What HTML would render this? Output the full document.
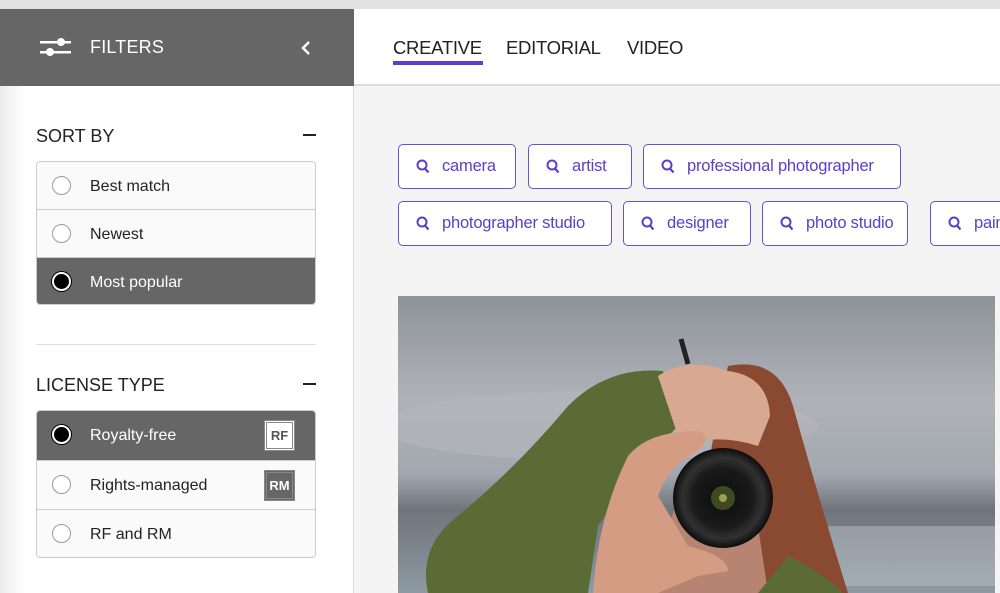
<!DOCTYPE html>
<html><head><meta charset="utf-8"><style>
*{box-sizing:border-box;margin:0;padding:0}
body{width:1000px;height:593px;overflow:hidden;background:#f4f4f4;font-family:"Liberation Sans",sans-serif;position:relative}
.topbar{position:absolute;left:0;top:0;width:1000px;height:9px;background:#e2e2e2}
.fh{position:absolute;left:0;top:9px;width:354px;height:77px;background:#666;color:#fff}
.fh .t{position:absolute;left:90px;top:28px;font-size:18px;letter-spacing:.2px}
.side{position:absolute;left:0;top:86px;width:354px;height:507px;background:linear-gradient(90deg,#ececec 0,#fff 26px);border-right:1px solid #ddd}
.mh{position:absolute;left:354px;top:9px;width:646px;height:77px;background:#fff;border-bottom:2px solid #ddd}
.tab{position:absolute;top:28px;font-size:18.5px;color:#222;letter-spacing:-.3px}
.h{position:absolute;left:36px;font-size:18px;color:#222}
.minus{position:absolute;left:303px;width:13px;height:2px;background:#222}
.box{position:absolute;left:36px;width:280px;border:1px solid #ccc;border-radius:4px;overflow:hidden;background:#fafafa}
.row{height:48px;border-bottom:1px solid #ccc;position:relative;font-size:16px;color:#222}
.row:last-child{border-bottom:none}
.row span{position:absolute;left:53px;top:16px}
.row i{position:absolute;left:15px;top:14px;width:19px;height:19px;border:1px solid #999;border-radius:50%;background:#fff}
.row.sel{background:#666;color:#fff}
.row.sel i{background:#000;border:2px solid #fff;box-shadow:0 0 0 1px #000}
.badge{position:absolute;left:227px;top:9px;width:31px;height:31px;border:1px solid #888;font-size:13px;font-weight:bold;text-align:center;line-height:25px}
.chip{position:absolute;height:45px;border:1.5px solid #6a50cf;border-radius:5px;background:#fff;color:#5a3fc8;font-size:16.5px;letter-spacing:-.2px;line-height:43px;padding-left:43px;white-space:nowrap;overflow:hidden}
.chip svg{position:absolute;left:17px;top:14px}
</style></head><body>
<div class="topbar"></div>
<div class="fh">
<svg style="position:absolute;left:39px;top:27px" width="34" height="22"><rect x="1" y="5" width="31" height="2.5" fill="#fff"/><rect x="1" y="15" width="31" height="2.5" fill="#fff"/><circle cx="22" cy="6" r="4" fill="#fff"/><circle cx="11" cy="16" r="4" fill="#fff"/></svg>
<div class="t">FILTERS</div>
<svg style="position:absolute;left:300px;top:31px" width="12" height="16"><path d="M9 2 L3 8 L9 14" stroke="#fff" stroke-width="2.5" fill="none"/></svg>
</div>
<div class="side"></div>
<div class="mh">
<div class="tab" style="left:39px">CREATIVE</div>
<div style="position:absolute;left:39px;top:52px;width:90px;height:4px;background:#5a3fd0"></div>
<div class="tab" style="left:152px">EDITORIAL</div>
<div class="tab" style="left:273px">VIDEO</div>
</div>

<div class="h" style="top:126px">SORT BY</div><div class="minus" style="top:134px"></div>
<div class="box" style="top:161px;height:144px">
<div class="row"><i></i><span>Best match</span></div>
<div class="row"><i></i><span>Newest</span></div>
<div class="row sel"><i></i><span>Most popular</span></div>
</div>
<div style="position:absolute;left:36px;top:344px;width:280px;height:1px;background:#ddd"></div>
<div class="h" style="top:375px">LICENSE TYPE</div><div class="minus" style="top:383px"></div>
<div class="box" style="top:410px;height:148px">
<div class="row sel" style="height:50px"><i></i><span>Royalty-free</span><div class="badge" style="background:#fff;color:#555;border:3px double #888">RF</div></div>
<div class="row" style="height:49px"><i></i><span>Rights-managed</span><div class="badge" style="background:#666;color:#fff;border:3px double #888">RM</div></div>
<div class="row"><i></i><span>RF and RM</span></div>
</div>

<div class="chip" style="left:398px;top:144px;width:118px"><svg width="14" height="16"><circle cx="6" cy="6" r="4.5" stroke="#5a3fc8" stroke-width="2" fill="none"/><path d="M9 9.5 L12.5 13.5" stroke="#5a3fc8" stroke-width="2.2"/></svg>camera</div>
<div class="chip" style="left:528px;top:144px;width:104px"><svg width="14" height="16"><circle cx="6" cy="6" r="4.5" stroke="#5a3fc8" stroke-width="2" fill="none"/><path d="M9 9.5 L12.5 13.5" stroke="#5a3fc8" stroke-width="2.2"/></svg>artist</div>
<div class="chip" style="left:643px;top:144px;width:258px"><svg width="14" height="16"><circle cx="6" cy="6" r="4.5" stroke="#5a3fc8" stroke-width="2" fill="none"/><path d="M9 9.5 L12.5 13.5" stroke="#5a3fc8" stroke-width="2.2"/></svg>professional photographer</div>
<div class="chip" style="left:398px;top:201px;width:214px"><svg width="14" height="16"><circle cx="6" cy="6" r="4.5" stroke="#5a3fc8" stroke-width="2" fill="none"/><path d="M9 9.5 L12.5 13.5" stroke="#5a3fc8" stroke-width="2.2"/></svg>photographer studio</div>
<div class="chip" style="left:623px;top:201px;width:128px"><svg width="14" height="16"><circle cx="6" cy="6" r="4.5" stroke="#5a3fc8" stroke-width="2" fill="none"/><path d="M9 9.5 L12.5 13.5" stroke="#5a3fc8" stroke-width="2.2"/></svg>designer</div>
<div class="chip" style="left:762px;top:201px;width:146px"><svg width="14" height="16"><circle cx="6" cy="6" r="4.5" stroke="#5a3fc8" stroke-width="2" fill="none"/><path d="M9 9.5 L12.5 13.5" stroke="#5a3fc8" stroke-width="2.2"/></svg>photo studio</div>
<div class="chip" style="left:930px;top:201px;width:90px"><svg width="14" height="16"><circle cx="6" cy="6" r="4.5" stroke="#5a3fc8" stroke-width="2" fill="none"/><path d="M9 9.5 L12.5 13.5" stroke="#5a3fc8" stroke-width="2.2"/></svg>painter</div>

<svg style="position:absolute;left:398px;top:296px" width="597" height="297" viewBox="0 0 597 297">
<defs>
<linearGradient id="sky" x1="0" y1="0" x2="0" y2="1"><stop offset="0" stop-color="#8e939a"/><stop offset=".35" stop-color="#b0b2b8"/><stop offset=".6" stop-color="#a2a8af"/><stop offset=".72" stop-color="#6f757b"/><stop offset="1" stop-color="#8d99a3"/></linearGradient>
<radialGradient id="lens"><stop offset="0" stop-color="#5a6a30"/><stop offset=".2" stop-color="#111"/><stop offset=".6" stop-color="#1a1a1a"/><stop offset=".8" stop-color="#333"/><stop offset="1" stop-color="#0d0d0d"/></radialGradient>
</defs>
<rect width="597" height="297" fill="url(#sky)"/>
<ellipse cx="200" cy="130" rx="220" ry="35" fill="#b8b8bd" opacity=".5"/>
<rect x="430" y="230" width="167" height="60" fill="#c9cdd2" opacity=".4"/>
<path d="M330 70 Q380 60 395 110 Q420 200 450 297 L300 297 Q300 200 330 70Z" fill="#8a4a32"/>
<path d="M290 170 Q330 190 360 230 L370 297 L250 297Z" fill="#b68470"/>
<path d="M30 297 Q20 250 60 220 Q120 170 170 110 Q210 70 265 75 L280 130 Q240 170 200 230 L190 297Z" fill="#5a6b36"/>
<path d="M390 260 Q430 280 445 297 L360 297Z" fill="#5a6b36"/>
<path d="M260 80 Q290 60 330 75 Q370 80 372 120 L360 150 Q330 140 300 145 L280 140Z" fill="#d9a890"/>
<path d="M195 297 Q200 220 230 160 Q250 135 300 135 Q315 140 300 155 Q270 170 260 200 L290 250 Q330 260 330 275 L300 280 L260 297Z" fill="#d49c82"/>
<circle cx="325" cy="202" r="50" fill="url(#lens)"/>
<circle cx="325" cy="202" r="38" fill="none" stroke="#2c2c2c" stroke-width="3"/>
<circle cx="325" cy="202" r="12" fill="#3d4a20"/>
<circle cx="325" cy="202" r="4" fill="#9aa050"/>
<path d="M283 43 L290 68" stroke="#222" stroke-width="5"/>
</svg>
</body></html>
